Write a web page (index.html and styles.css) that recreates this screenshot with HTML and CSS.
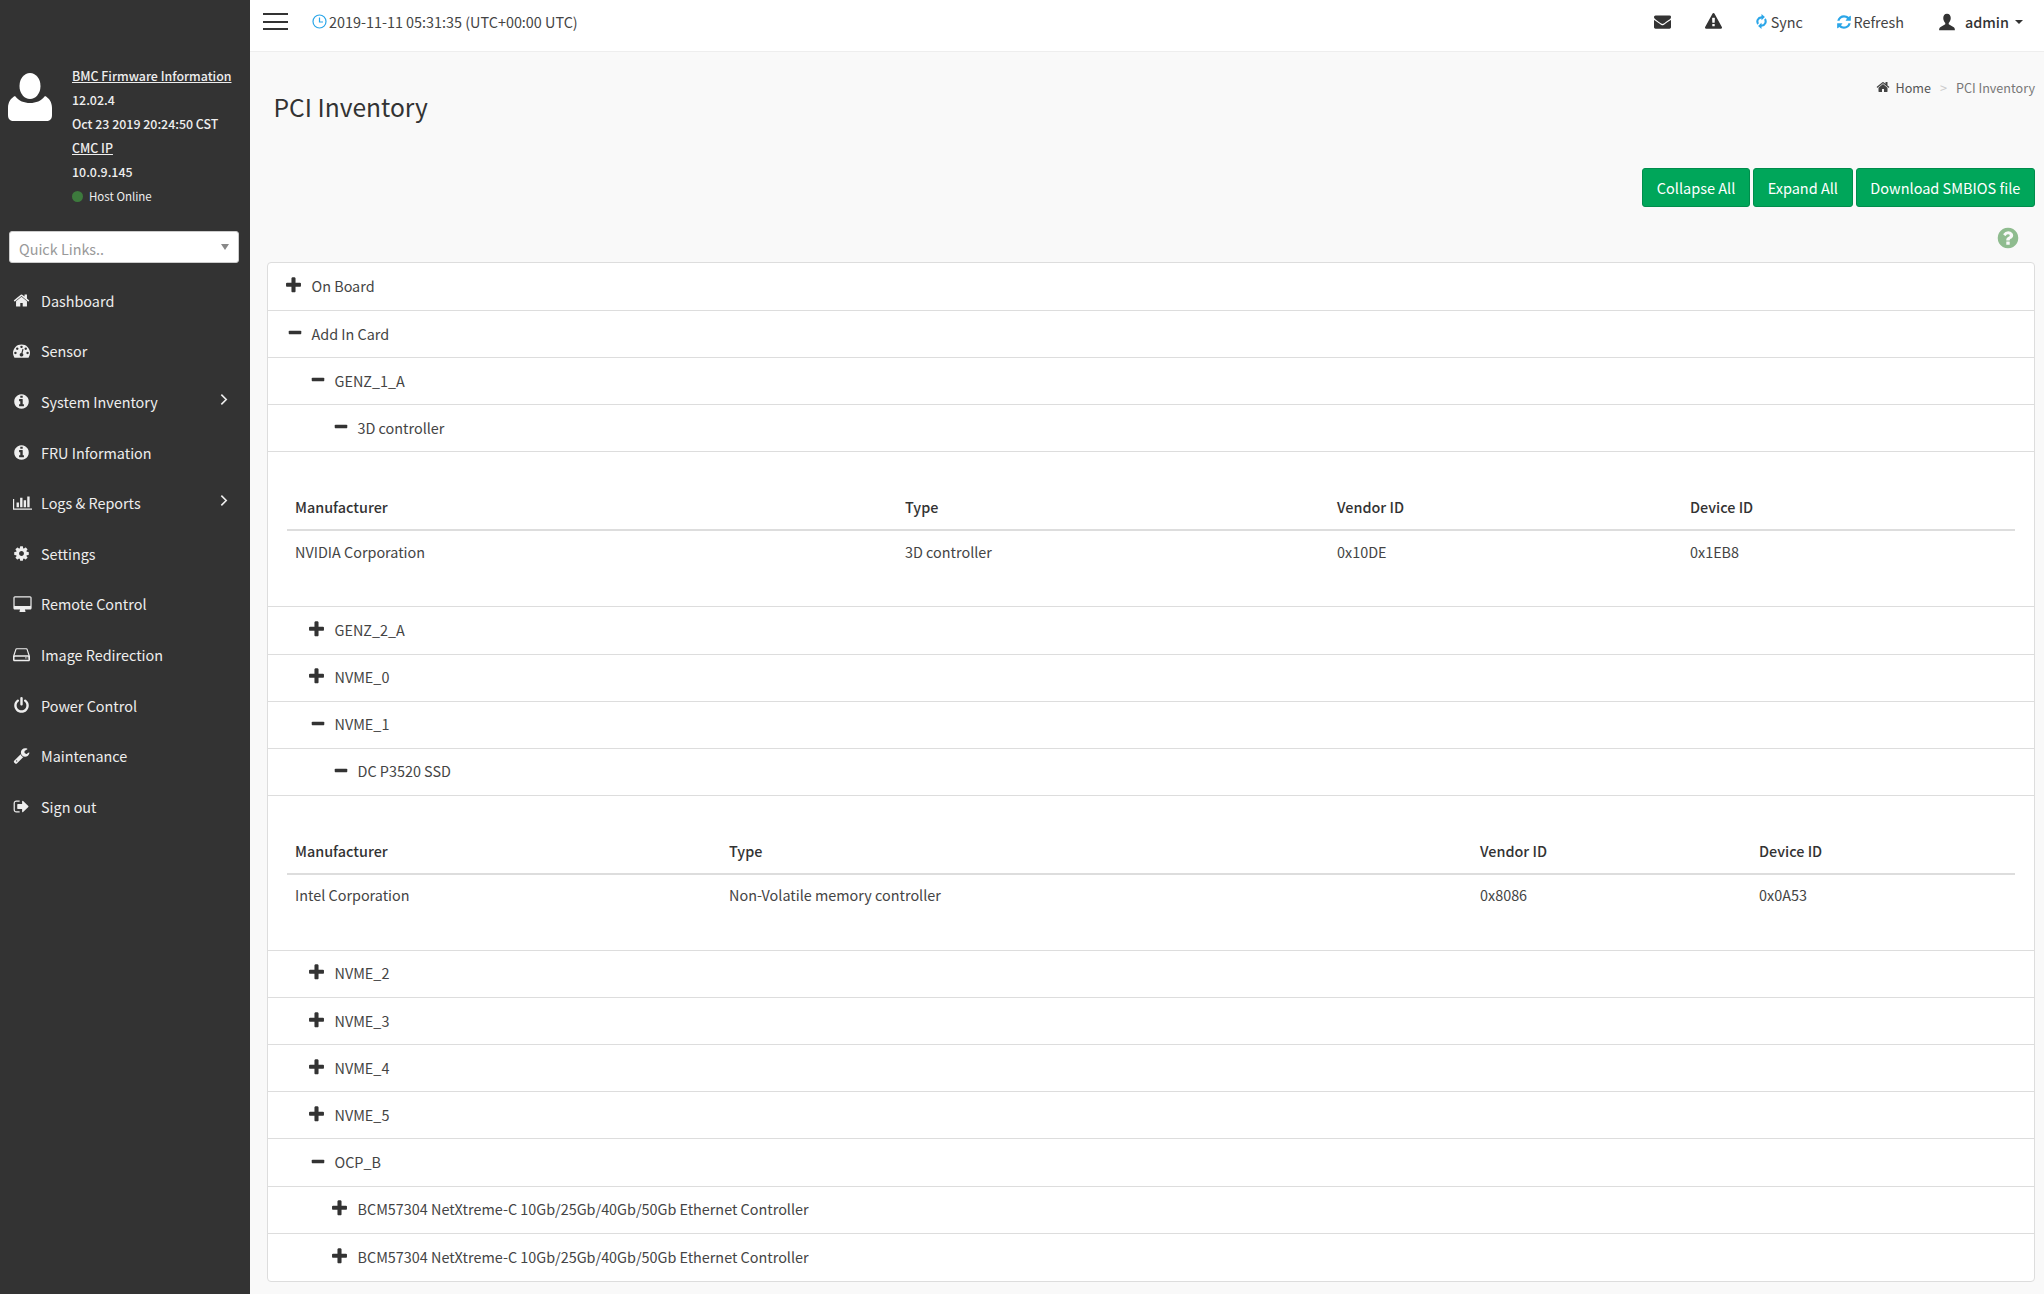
FILE: index.html
```html
<!DOCTYPE html>
<html lang="en">

<head>
    <meta charset="UTF-8">
    <title>PCI Inventory</title>
    <link rel="stylesheet" href="styles.css">
</head>

<body>
    <svg class="icon-defs" width="0" height="0">
        <symbol id="i-home" viewBox="0 0 1792 1792"><path d="M1472 992v480q0 26-19 45t-45 19h-384v-384h-256v384h-384q-26 0-45-19t-19-45v-480q0-1 .5-3t.5-3l575-474 575 474q1 2 1 6zm223-69l-62 74q-8 9-21 11h-3q-13 0-21-7l-692-577-692 577q-12 8-24 7-13-2-21-11l-62-74q-8-10-7-23.5t11-21.5l719-599q32-26 76-26t76 26l244 204v-195q0-14 9-23t23-9h192q14 0 23 9t9 23v408l219 182q10 8 11 21.5t-7 23.5z"/></symbol>
        <symbol id="i-gauge" viewBox="0 0 1792 1792"><path d="M384 1152q0-53-37.5-90.5t-90.5-37.5-90.5 37.5-37.5 90.5 37.5 90.5 90.5 37.5 90.5-37.5 37.5-90.5zm192-448q0-53-37.5-90.5t-90.5-37.5-90.5 37.5-37.5 90.5 37.5 90.5 90.5 37.5 90.5-37.5 37.5-90.5zm428 481l101-382q6-26-7.5-48.5t-38.5-29.5-48 6.5-30 39.5l-101 382q-60 5-107 43.5t-63 98.5q-20 77 20 146t117 89 146-20 89-117q16-60-6-117t-72-91zm660-33q0-53-37.5-90.5t-90.5-37.5-90.5 37.5-37.5 90.5 37.5 90.5 90.5 37.5 90.5-37.5 37.5-90.5zm-640-640q0-53-37.5-90.5t-90.5-37.5-90.5 37.5-37.5 90.5 37.5 90.5 90.5 37.5 90.5-37.5 37.5-90.5zm448 192q0-53-37.5-90.5t-90.5-37.5-90.5 37.5-37.5 90.5 37.5 90.5 90.5 37.5 90.5-37.5 37.5-90.5zm320 448q0 261-141 483-19 29-54 29h-1402q-35 0-54-29-141-221-141-483 0-182 71-348t191-286 286-191 348-71 348 71 286 191 191 286 71 348z"/></symbol>
        <symbol id="i-info" viewBox="0 0 1792 1792"><path d="M1152 1376v-160q0-14-9-23t-23-9h-96v-512q0-14-9-23t-23-9h-320q-14 0-23 9t-9 23v160q0 14 9 23t23 9h96v320h-96q-14 0-23 9t-9 23v160q0 14 9 23t23 9h448q14 0 23-9t9-23zm-128-896v-160q0-14-9-23t-23-9h-192q-14 0-23 9t-9 23v160q0 14 9 23t23 9h192q14 0 23-9t9-23zm640 416q0 209-103 385.5t-279.5 279.5-385.5 103-385.5-103-279.5-279.5-103-385.5 103-385.5 279.5-279.5 385.5-103 385.5 103 279.5 279.5 103 385.5z"/></symbol>
        <symbol id="i-chart" viewBox="0 0 2048 1792"><path d="M640 896v512h-256v-512h256zm384-512v1024h-256v-1024h256zm1024 1152v128h-2048v-1152h128v1024h1920zm-640-896v768h-256v-768h256zm384-384v1152h-256v-1152h256z"/></symbol>
        <symbol id="i-cog" viewBox="0 0 1792 1792"><path d="M1152 896q0-106-75-181t-181-75-181 75-75 181 75 181 181 75 181-75 75-181zm512-109v222q0 12-8 23t-20 13l-185 28q-19 54-39 91 35 50 107 138 10 12 10 25t-9 23q-27 37-99 108t-94 71q-12 0-26-9l-138-108q-44 23-91 38-16 136-29 186-7 28-36 28h-222q-14 0-24.5-8.5t-11.5-21.5l-28-184q-49-16-90-37l-141 107q-10 9-25 9-14 0-25-11-126-114-165-168-7-10-7-23 0-12 8-23 15-21 51-66.5t54-70.5q-27-50-41-99l-183-27q-13-2-21-12.5t-8-23.5v-222q0-12 8-23t19-13l186-28q14-46 39-92-40-57-107-138-10-12-10-24 0-10 9-23 26-36 98.5-107.5t94.5-71.5q13 0 26 10l138 107q44-23 91-38 16-136 29-186 7-28 36-28h222q14 0 24.5 8.5t11.5 21.5l28 184q49 16 90 37l142-107q9-9 24-9 13 0 25 10 129 119 165 170 7 8 7 22 0 12-8 23-15 21-51 66.5t-54 70.5q26 50 41 98l183 28q13 2 21 12.5t8 23.5z"/></symbol>
        <symbol id="i-desktop" viewBox="0 0 1920 1792"><path fill-rule="evenodd" d="M160 128h1600q66 0 113 47t47 113v1088q0 66-47 113t-113 47h-544q0 37 16 77.5t32 71 16 43.5q0 26-19 45t-45 19h-512q-26 0-45-19t-19-45q0-14 16-44t32-70 16-78h-544q-66 0-113-47t-47-113v-1088q0-66 47-113t113-47zm0 128q-13 0-22.5 9.5t-9.5 22.5v832q0 13 9.5 22.5t22.5 9.5h1600q13 0 22.5-9.5t9.5-22.5v-832q0-13-9.5-22.5t-22.5-9.5z"/></symbol>
        <symbol id="i-hdd" viewBox="0 0 1792 1792"><path fill-rule="evenodd" d="M390 224h1012q50 0 88 30t53 76l227 680q22 66 22 110v338q0 66-47 113t-113 47h-1472q-66 0-113-47t-47-113v-338q0-44 22-110l227-680q15-46 53-76t88-30zm0 128q-14 0-25 18l-207 622q30-14 66-14h1344q36 0 66 14l-207-622q-11-18-25-18zm-166 768q-32 0-64 32v272q0 32 32 32h1408q32 0 32-32v-272q0-32-64-32zm1072 64h128v128h-128zm256 0h64v128h-64z"/></symbol>
        <symbol id="i-power" viewBox="0 0 1792 1792"><path d="M1664 896q0 156-61 298t-164 245-245 164-298 61-298-61-245-164-164-245-61-298q0-182 80.5-343t226.5-270q43-32 95.5-25t83.5 50q32 42 24.5 94.5t-49.5 84.5q-98 74-151.5 181t-53.5 228q0 104 40.5 198.5t109.5 163.5 163.5 109.5 198.5 40.5 198.5-40.5 163.5-109.5 109.5-163.5 40.5-198.5q0-121-53.5-228t-151.5-181q-42-32-49.5-84.5t24.5-94.5q31-43 84-50t95 25q146 109 226.5 270t80.5 343zm-640-768v640q0 52-38 90t-90 38-90-38-38-90v-640q0-52 38-90t90-38 90 38 38 90z"/></symbol>
        <symbol id="i-wrench" viewBox="0 0 1792 1792"><path d="M448 1472q0-26-19-45t-45-19-45 19-19 45 19 45 45 19 45-19 19-45zm644-420l-682 682q-37 37-90 37-52 0-91-37l-106-108q-38-36-38-90 0-53 38-91l681-681q39 98 114.5 173.5t173.5 114.5zm634-435q0 39-23 106-47 134-164.5 217.5t-258.5 83.5q-185 0-316.5-131.5t-131.5-316.5 131.5-316.5 316.5-131.5q58 0 121.5 16.5t107.5 46.5q16 11 16 28t-16 28l-293 169v224l193 107q5-3 79-48.5t135.5-81 70.5-35.5q15 0 23.5 10t8.5 25z"/></symbol>
        <symbol id="i-signout" viewBox="0 0 1792 1792"><path d="M704 1440q0 4 1 20t.5 26.5-3 23.5-10 19.5-20.5 6.5h-320q-119 0-203.5-84.5t-84.5-203.5v-704q0-119 84.5-203.5t203.5-84.5h320q13 0 22.5 9.5t9.5 22.5q0 4 1 20t.5 26.5-3 23.5-10 19.5-20.5 6.5h-320q-66 0-113 47t-47 113v704q0 66 47 113t113 47h312l11.5 1 11.5 3 8 5.5 7 9 2 13.5zm928-544q0 26-19 45l-544 544q-19 19-45 19t-45-19-19-45v-288h-448q-26 0-45-19t-19-45v-384q0-26 19-45t45-19h448v-288q0-26 19-45t45-19 45 19l544 544q19 19 19 45z"/></symbol>
        <symbol id="i-envelope" viewBox="0 0 1792 1792"><path d="M1792 710v794q0 66-47 113t-113 47h-1472q-66 0-113-47t-47-113v-794q44 49 101 87 362 246 497 345 57 42 92.5 65.5t94.5 48 110 24.5h2q51 0 110-24.5t94.5-48 92.5-65.5q170-123 498-345 57-39 100-87zm0-294q0 79-49 151t-122 123q-376 261-468 325-10 7-42.5 30.5t-54 38-52 32.5-57.5 27-50 9h-2q-23 0-50-9t-57.5-27-52-32.5-54-38-42.5-30.5q-91-64-262-182.5t-205-142.5q-62-42-117-115.5t-55-136.5q0-78 41.5-130t118.5-52h1472q65 0 112.5 47t47.5 113z"/></symbol>
        <symbol id="i-warning" viewBox="0 0 1792 1792"><path d="M1024 1375v-190q0-14-9.5-23.5t-22.5-9.5h-192q-13 0-22.5 9.5t-9.5 23.5v190q0 14 9.5 23.5t22.5 9.5h192q13 0 22.5-9.5t9.5-23.5zm-2-374l18-459q0-12-10-19-13-11-24-11h-220q-11 0-24 11-10 7-10 21l17 457q0 10 10 16.5t24 6.5h185q14 0 23.5-6.5t10.5-16.5zm-14-934l768 1408q35 63-2 126-17 29-46.5 46t-63.5 17h-1536q-34 0-63.5-17t-46.5-46q-37-63-2-126l768-1408q17-31 47-49t65-18 65 18 47 49z"/></symbol>
        <symbol id="i-refresh" viewBox="0 0 1792 1792"><path d="M1639 1056q0 5-1 7-64 268-268 434.5t-478 166.5q-146 0-282.5-55t-243.5-157l-129 129q-19 19-45 19t-45-19-19-45v-448q0-26 19-45t45-19h448q26 0 45 19t19 45-19 45l-137 137q71 66 161 102t187 36q134 0 250-65t186-179q11-17 53-117 8-23 30-23h192q13 0 22.5 9.5t9.5 22.5zm25-800v448q0 26-19 45t-45 19h-448q-26 0-45-19t-19-45 19-45l138-138q-148-137-349-137-134 0-250 65t-186 179q-11 17-53 117-8 23-30 23h-199q-13 0-22.5-9.5t-9.5-22.5v-7q65-268 270-434.5t480-166.5q146 0 284 55.5t245 156.5l130-129q19-19 45-19t45 19 19 45z"/></symbol>
        <symbol id="i-sync" viewBox="4 1 16 22"><path d="M12 1 17 5.500 12 10V7.500A4.500 4.500 0 0 0 8.200 14.400L5.900 16.600A7.800 7.800 0 0 1 12 4.200zM12 23 7 18.500 12 14V16.500A4.500 4.500 0 0 0 15.800 9.600L18.100 7.400A7.800 7.800 0 0 1 12 19.800z"/></symbol>
        <symbol id="i-user" viewBox="0 0 24 24"><path d="M12 1C8.600 1 7 3.600 7 6.800 7 9.500 8.200 12 9.700 13.200V15L3.500 18.500C2 19.400 1.500 20.300 1.500 23H22.500C22.500 20.300 22 19.400 20.500 18.500L14.300 15V13.200C15.800 12 17 9.500 17 6.800 17 3.600 15.400 1 12 1Z"/></symbol>
        <symbol id="i-plus" viewBox="0 0 1792 1792"><path d="M1600 736v192q0 40-28 68t-68 28h-416v416q0 40-28 68t-68 28h-192q-40 0-68-28t-28-68v-416h-416q-40 0-68-28t-28-68v-192q0-40 28-68t68-28h416v-416q0-40 28-68t68-28h192q40 0 68 28t28 68v416h416q40 0 68 28t28 68z"/></symbol>
        <symbol id="i-minus" viewBox="0 0 1792 1792"><path d="M1600 736v192q0 40-28 68t-68 28h-1216q-40 0-68-28t-28-68v-192q0-40 28-68t68-28h1216q40 0 68 28t28 68z"/></symbol>
    </svg>

    <aside class="sidebar">
        <div class="user-panel">
            <svg class="avatar" viewBox="0 0 46 50">
                <ellipse cx="23" cy="14" rx="10.500" ry="13"/>
                <path d="M8 24C12 29 17 31 23 31S34 29 38 24C42 26 45 30 45 36V43C45 47 43 49 39 49H7C3 49 1 47 1 43V36C1 30 4 26 8 24Z"/>
            </svg>
            <div class="user-info">
                <a class="info-line info-link" href="#">BMC Firmware Information</a>
                <div class="info-line">12.02.4</div>
                <div class="info-line">Oct 23 2019 20:24:50 CST</div>
                <a class="info-line info-link" href="#">CMC IP</a>
                <div class="info-line">10.0.9.145</div>
                <div class="info-line host-status"><span class="status-dot"></span>Host Online</div>
            </div>
        </div>

        <div class="quick-links">
            <span>Quick Links..</span>
            <span class="quick-caret"></span>
        </div>

        <ul class="side-menu">
            <li><svg class="side-icon"><use href="#i-home"/></svg>Dashboard</li>
            <li><svg class="side-icon"><use href="#i-gauge"/></svg>Sensor</li>
            <li><svg class="side-icon"><use href="#i-info"/></svg>System Inventory<svg class="side-chevron" viewBox="0 0 8 12"><path d="M2 1.500 6.500 6 2 10.500"/></svg></li>
            <li><svg class="side-icon"><use href="#i-info"/></svg>FRU Information</li>
            <li><svg class="side-icon side-icon-wide"><use href="#i-chart"/></svg>Logs &amp; Reports<svg class="side-chevron" viewBox="0 0 8 12"><path d="M2 1.500 6.500 6 2 10.500"/></svg></li>
            <li><svg class="side-icon"><use href="#i-cog"/></svg>Settings</li>
            <li><svg class="side-icon side-icon-wide"><use href="#i-desktop"/></svg>Remote Control</li>
            <li><svg class="side-icon"><use href="#i-hdd"/></svg>Image Redirection</li>
            <li><svg class="side-icon"><use href="#i-power"/></svg>Power Control</li>
            <li><svg class="side-icon"><use href="#i-wrench"/></svg>Maintenance</li>
            <li><svg class="side-icon"><use href="#i-signout"/></svg>Sign out</li>
        </ul>
    </aside>

    <div class="main">
        <header class="topbar">
            <div class="hamburger"><span></span><span></span><span></span></div>
            <div class="clock">
                <svg class="clock-icon" viewBox="0 0 15 15"><circle cx="7.500" cy="7.500" r="6.500"/><path d="M7.500 3.500V8H11"/></svg>
                2019-11-11 05:31:35 (UTC+00:00 UTC)
            </div>
            <nav class="top-nav">
                <svg class="top-icon"><use href="#i-envelope"/></svg>
                <svg class="top-icon top-warning"><use href="#i-warning"/></svg>
                <span class="top-link top-sync"><svg class="sync-icon"><use href="#i-sync"/></svg>Sync</span>
                <span class="top-link top-refresh"><svg class="refresh-icon"><use href="#i-refresh"/></svg>Refresh</span>
                <span class="top-user"><svg class="user-icon"><use href="#i-user"/></svg><b>admin</b><span class="user-caret"></span></span>
            </nav>
        </header>

        <div class="content">
            <div class="page-head">
                <h1>PCI Inventory</h1>
                <div class="breadcrumb">
                    <svg class="crumb-icon"><use href="#i-home"/></svg>
                    <span class="crumb-home">Home</span>
                    <span class="crumb-sep">&gt;</span>
                    <span>PCI Inventory</span>
                </div>
            </div>

            <div class="actions">
                <button class="btn">Collapse All</button>
                <button class="btn">Expand All</button>
                <button class="btn">Download SMBIOS file</button>
            </div>

            <div class="help-row">
                <svg class="help-icon" viewBox="0 0 1792 1792"><path d="M1024 1376v-192q0-14-9-23t-23-9h-192q-14 0-23 9t-9 23v192q0 14 9 23t23 9h192q14 0 23-9t9-23zm256-672q0-88-55.500-163t-138.500-116-170-41q-243 0-371 213-15 24 8 42l132 100q7 6 19 6 16 0 25-12 53-68 86-92 34-24 86-24 48 0 85.500 26t37.500 59q0 38-20 61t-68 45q-63 28-115.500 86.500t-52.500 125.500v36q0 14 9 23t23 9h192q14 0 23-9t9-23q0-19 21.500-49.500t54.500-49.500q32-18 49-28.500t46-35 44.500-48 28-60.500 12.500-81zm384 192q0 209-103 385.500t-279.500 279.500-385.500 103-385.500-103-279.500-279.500-103-385.500 103-385.500 279.500-279.500 385.500-103 385.500 103 279.500 279.500 103 385.500z"/></svg>
            </div>

            <div class="tree">
                <div class="tree-row"><svg class="tree-icon"><use href="#i-plus"/></svg>On Board</div>
                <div class="tree-row"><svg class="tree-icon tree-minus"><use href="#i-minus"/></svg>Add In Card</div>
                <div class="tree-row level-1"><svg class="tree-icon tree-minus"><use href="#i-minus"/></svg>GENZ_1_A</div>
                <div class="tree-row level-2"><svg class="tree-icon tree-minus"><use href="#i-minus"/></svg>3D controller</div>
                <div class="tree-detail">
                    <table class="grid-gpu">
                        <tr><th>Manufacturer</th><th>Type</th><th>Vendor ID</th><th>Device ID</th></tr>
                        <tr><td>NVIDIA Corporation</td><td>3D controller</td><td>0x10DE</td><td>0x1EB8</td></tr>
                    </table>
                </div>
                <div class="tree-row level-1"><svg class="tree-icon"><use href="#i-plus"/></svg>GENZ_2_A</div>
                <div class="tree-row level-1"><svg class="tree-icon"><use href="#i-plus"/></svg>NVME_0</div>
                <div class="tree-row level-1"><svg class="tree-icon tree-minus"><use href="#i-minus"/></svg>NVME_1</div>
                <div class="tree-row level-2"><svg class="tree-icon tree-minus"><use href="#i-minus"/></svg>DC P3520 SSD</div>
                <div class="tree-detail">
                    <table class="grid-ssd">
                        <tr><th>Manufacturer</th><th>Type</th><th>Vendor ID</th><th>Device ID</th></tr>
                        <tr><td>Intel Corporation</td><td>Non-Volatile memory controller</td><td>0x8086</td><td>0x0A53</td></tr>
                    </table>
                </div>
                <div class="tree-row level-1"><svg class="tree-icon"><use href="#i-plus"/></svg>NVME_2</div>
                <div class="tree-row level-1"><svg class="tree-icon"><use href="#i-plus"/></svg>NVME_3</div>
                <div class="tree-row level-1"><svg class="tree-icon"><use href="#i-plus"/></svg>NVME_4</div>
                <div class="tree-row level-1"><svg class="tree-icon"><use href="#i-plus"/></svg>NVME_5</div>
                <div class="tree-row level-1"><svg class="tree-icon tree-minus"><use href="#i-minus"/></svg>OCP_B</div>
                <div class="tree-row level-2"><svg class="tree-icon"><use href="#i-plus"/></svg>BCM57304 NetXtreme-C 10Gb/25Gb/40Gb/50Gb Ethernet Controller</div>
                <div class="tree-row level-2"><svg class="tree-icon"><use href="#i-plus"/></svg>BCM57304 NetXtreme-C 10Gb/25Gb/40Gb/50Gb Ethernet Controller</div>
            </div>
        </div>
    </div>
</body>

</html>
```

FILE: styles.css
```css
* {
    box-sizing: border-box;
}

body {
    margin: 0;
    display: flex;
    height: 1294px;
    overflow: hidden;
    background-color: #f9f9f9;
    color: #444;
    font-family: "Noto Sans CJK SC", "Noto Sans", sans-serif;
    font-size: 14.4px;
}

.icon-defs {
    position: absolute;
}

svg {
    fill: currentColor;
}

/* Sidebar */
.sidebar {
    width: 250px;
    flex-shrink: 0;
    background-color: #333;
    color: #eee;
    padding-top: 64px;
}

.user-panel {
    display: flex;
    padding-left: 7px;
}

.avatar {
    width: 46px;
    height: 50px;
    margin-top: 8px;
    margin-right: 19px;
    fill: #fff;
}

.user-info {
    font-size: 12.4px;
    font-weight: 500;
}

.info-line {
    display: block;
    height: 24px;
    line-height: 24px;
    color: #eee;
    white-space: nowrap;
}

.info-link {
    text-decoration: underline;
}

.host-status {
    display: flex;
    align-items: center;
    font-size: 11.5px;
    font-weight: 400;
}

.status-dot {
    width: 11px;
    height: 11px;
    margin-right: 6px;
    border-radius: 50%;
    background-color: #3d7a3d;
}

.quick-links {
    display: flex;
    align-items: center;
    justify-content: space-between;
    width: 230px;
    height: 32px;
    margin: 23px 0 0 9px;
    padding: 2px 9px 0;
    background-color: #fff;
    border: 1px solid #ccc;
    border-radius: 3px;
    color: #999;
}

.quick-caret {
    margin-bottom: 2px;
    border-left: 4px solid transparent;
    border-right: 4px solid transparent;
    border-top: 6px solid #888;
}

.side-menu {
    list-style: none;
    margin: 12px 0 0;
    padding: 0;
}

.side-menu li {
    position: relative;
    display: flex;
    align-items: center;
    height: 50.6px;
    padding-left: 13px;
}

.side-icon {
    width: 17px;
    height: 17px;
    margin-right: 11px;
    flex-shrink: 0;
}

.side-icon-wide {
    width: 19px;
    margin-right: 9px;
}

.side-chevron {
    position: absolute;
    left: 219px;
    top: 17px;
    width: 9px;
    height: 13px;
    fill: none;
    stroke: #eee;
    stroke-width: 1.5;
}

/* Top bar */
.main {
    flex: 1;
    min-width: 0;
    display: flex;
    flex-direction: column;
}

.topbar {
    display: flex;
    align-items: center;
    height: 52px;
    flex-shrink: 0;
    padding: 0 21px 8px 13px;
    background-color: #fff;
    border-bottom: 1px solid #eee;
}

.hamburger {
    display: flex;
    flex-direction: column;
    justify-content: space-between;
    width: 25px;
    height: 17px;
}

.hamburger span {
    height: 2px;
    background-color: #333;
}

.clock {
    display: flex;
    align-items: center;
    margin-left: 24px;
}

.clock-icon {
    width: 15px;
    height: 15px;
    margin-right: 2px;
    fill: none;
    stroke: #2ba6e8;
    stroke-width: 1.2;
}

.top-nav {
    display: flex;
    align-items: center;
    margin-left: auto;
    color: #333;
}

.top-icon {
    width: 17px;
    height: 17px;
}

.top-warning {
    margin-left: 34px;
}

.top-sync {
    margin-left: 33.5px;
}

.top-refresh {
    margin-left: 33.5px;
}

.top-link {
    display: flex;
    align-items: center;
    color: #444;
}

.sync-icon {
    width: 11px;
    height: 15px;
    margin-right: 4px;
    color: #2ba6e8;
}

.refresh-icon {
    width: 16px;
    height: 16px;
    margin-right: 1px;
    color: #2ba6e8;
}

.top-user {
    display: flex;
    align-items: center;
    margin-left: 34px;
}

.user-icon {
    width: 18px;
    height: 18px;
}

.top-user b {
    margin-left: 9px;
    font-weight: 500;
}

.user-caret {
    margin-left: 6px;
    border-left: 4px solid transparent;
    border-right: 4px solid transparent;
    border-top: 4px solid #333;
}

/* Content */
.content {
    flex: 1;
    padding: 0 9px 0 17px;
}

.page-head {
    display: flex;
    justify-content: space-between;
    height: 116px;
}

h1 {
    margin: 35px 0 0 6.5px;
    font-size: 24.6px;
    font-weight: 400;
    line-height: 38px;
    color: #333;
}

.breadcrumb {
    display: flex;
    align-items: center;
    height: 20px;
    margin-top: 25px;
    font-size: 12.6px;
    color: #777;
}

.crumb-icon {
    width: 14px;
    height: 14px;
    margin-right: 5px;
    color: #444;
}

.crumb-home {
    color: #555;
}

.crumb-sep {
    margin: 0 9px;
    color: #ccc;
}

.actions {
    display: flex;
    justify-content: flex-end;
    gap: 3px;
}

.btn {
    height: 39px;
    padding: 0 13.7px 1px;
    background-color: #00a65a;
    border: 1px solid #008d4c;
    border-radius: 3px;
    color: #fff;
    font-family: inherit;
    font-size: 14.5px;
}

.help-row {
    display: flex;
    justify-content: flex-end;
    height: 55px;
    padding: 18.5px 15px 0 0;
}

.help-icon {
    width: 24px;
    height: 24px;
    fill: #8fbc8f;
}

.tree {
    padding-top: 0.8px;
    background-color: #fff;
    border: 1px solid #ddd;
    border-radius: 4px;
}

.tree-row {
    display: flex;
    align-items: center;
    height: 47.15px;
    padding-left: 16px;
    padding-bottom: 2px;
    border-bottom: 1px solid #ddd;
    color: #444;
}

.tree-row:last-child {
    border-bottom: 0;
}

.level-1 {
    padding-left: 39px;
}

.level-2 {
    padding-left: 62px;
}

.tree-icon {
    width: 19px;
    height: 19px;
    margin-right: 8.5px;
    color: #333;
}

.tree-minus {
    width: 16px;
    height: 16px;
    margin-left: 3px;
}

.tree-detail {
    height: 155px;
    padding: 33.5px 19px 0;
    border-bottom: 1px solid #ddd;
}

table {
    width: 100%;
    table-layout: fixed;
    border-collapse: collapse;
}

th {
    height: 44.5px;
    padding: 0 8px 1.5px;
    text-align: left;
    font-weight: 500;
    color: #333;
    border-bottom: 2px solid #ddd;
}

td {
    height: 44px;
    padding: 0 8px 3px;
    color: #444;
}

.grid-gpu th:nth-child(1) {
    width: 610px;
}

.grid-gpu th:nth-child(2) {
    width: 432px;
}

.grid-gpu th:nth-child(3) {
    width: 353px;
}

.grid-ssd th:nth-child(1) {
    width: 434px;
}

.grid-ssd th:nth-child(2) {
    width: 751px;
}

.grid-ssd th:nth-child(3) {
    width: 279px;
}
```
